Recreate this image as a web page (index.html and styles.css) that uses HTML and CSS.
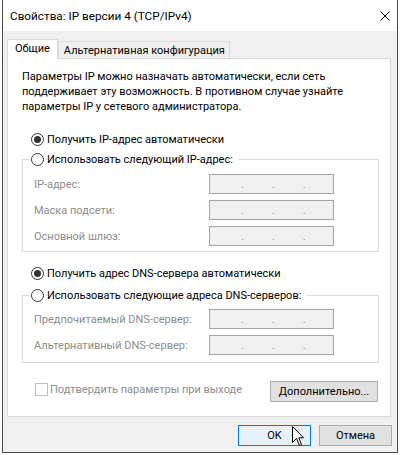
FILE: index.html
```html
<!DOCTYPE html>
<html>
<head>
	<meta charset="utf-8">
	<title>Свойства: IP версии 4 (TCP/IPv4)</title>
	<link rel="stylesheet" href="styles.css">
</head>
<body>
	<div class="window">
		<div class="titlebar">
			<span class="title">Свойства: IP версии 4 (TCP/IPv4)</span>
			<svg class="close" width="10" height="10" viewBox="0 0 10 10"><path d="M0.5 0.5 L9.5 9.5 M9.5 0.5 L0.5 9.5" stroke="#000" stroke-width="1"/></svg>
		</div>

		<div class="dialog">
			<div class="tabs">
				<div class="tab tab-active">Общие</div>
				<div class="tab">Альтернативная конфигурация</div>
			</div>

			<div class="panel">
				<p class="intro">Параметры IP можно назначать автоматически, если сеть<br>поддерживает эту возможность. В противном случае узнайте<br>параметры IP у сетевого администратора.</p>

				<div class="option option-first"><span class="radio checked"></span>Получить IP-адрес автоматически</div>

				<fieldset class="group group-ip">
					<legend><span class="option"><span class="radio"></span>Использовать следующий IP-адрес:</span></legend>
					<div class="fields">
						<span class="field-label">IP-адрес:</span>
						<span class="ip-box"><i>.</i><i>.</i><i>.</i></span>
						<span class="field-label">Маска подсети:</span>
						<span class="ip-box"><i>.</i><i>.</i><i>.</i></span>
						<span class="field-label">Основной шлюз:</span>
						<span class="ip-box"><i>.</i><i>.</i><i>.</i></span>
					</div>
				</fieldset>

				<div class="option option-dns"><span class="radio checked"></span>Получить адрес DNS-сервера автоматически</div>

				<fieldset class="group group-dns">
					<legend><span class="option"><span class="radio"></span>Использовать следующие адреса DNS-серверов:</span></legend>
					<div class="fields">
						<span class="field-label">Предпочитаемый DNS-сервер:</span>
						<span class="ip-box"><i>.</i><i>.</i><i>.</i></span>
						<span class="field-label">Альтернативный DNS-сервер:</span>
						<span class="ip-box"><i>.</i><i>.</i><i>.</i></span>
					</div>
				</fieldset>

				<div class="confirm-row">
					<span class="checkbox"></span>
					<span class="confirm-label">Подтвердить параметры при выходе</span>
					<button class="btn btn-advanced">Дополнительно...</button>
				</div>
			</div>

			<div class="actions">
				<button class="btn btn-default">OK</button>
				<button class="btn">Отмена</button>
			</div>
		</div>
	</div>

	<svg class="cursor" width="13" height="21" viewBox="0 0 13 21"><path d="M0.5 0.5 L0.5 16.5 L4.5 12.5 L7.5 19.5 L9.5 18.5 L6.8 11.8 L11.5 11.8 Z" fill="#fff" stroke="#000" stroke-width="1" stroke-linejoin="miter"/></svg>
</body>
</html>
```

FILE: styles.css
```css
/* Windows 10 style dialog */
* {
	box-sizing: border-box;
}

body {
	margin: 0;
	background: #fff;
	font-family: Roboto, "Noto Sans", sans-serif;
	font-size: 11px;
	color: #000;
}

.window {
	width: 396px;
	height: 453px;
	margin-left: 2px;
	border: 1px solid #4a4a4a;
	border-top: none;
	background: #f0f0f0;
}

.titlebar {
	display: flex;
	align-items: center;
	height: 31px;
	padding: 0 7px 0 7px;
	background: #fff;
}

.title {
	font-size: 11.75px;
}

.close {
	margin-left: auto;
}

.dialog {
	padding: 8px 6px 0 4px;
}

.tabs {
	position: relative;
	z-index: 1;
	display: flex;
	align-items: flex-end;
	margin-bottom: -1px;
}

.tab {
	display: flex;
	align-items: center;
	height: 18px;
	padding: 0 4px 0 5px;
	border: 1px solid #d9d9d9;
	background: #f0f0f0;
	white-space: nowrap;
}

.tab-active {
	height: 20px;
	padding: 0 7px 1px 7px;
	background: #fff;
	border-bottom-color: #fff;
}

.panel {
	height: 359px;
	border: 1px solid #d9d9d9;
	background: #fff;
}

.intro {
	margin: 0;
	padding: 10px 0 0 14px;
	line-height: 15px;
	white-space: nowrap;
}

.option {
	display: flex;
	align-items: center;
	height: 15px;
	line-height: 15px;
	white-space: nowrap;
}

.option-first {
	margin: 18px 0 0 23px;
}

.option-dns {
	margin: 14px 0 0 23px;
}

.radio {
	display: inline-flex;
	align-items: center;
	justify-content: center;
	width: 13px;
	height: 13px;
	margin-right: 3px;
	border: 1px solid #333;
	border-radius: 50%;
	background: #fff;
}

.radio.checked::after {
	content: "";
	width: 7px;
	height: 7px;
	border-radius: 50%;
	background: #333;
}

.group {
	width: 357px;
	margin: 5px 0 0 14px;
	padding: 0;
	border: 1px solid #dcdcdc;
	min-inline-size: 0;
}

.group-dns {
	margin-top: 7px;
}

.group legend {
	margin-left: 8px;
	padding: 0 6px 0 0;
}

.fields {
	display: grid;
	grid-template-columns: 175px 125px;
	row-gap: 6px;
	align-items: center;
	padding: 7px 0 5px 11px;
}

.group-dns .fields {
	padding: 6px 0 7px 11px;
}

.field-label {
	color: #8c8c8c;
	white-space: nowrap;
}

.ip-box {
	display: flex;
	height: 20px;
	padding-left: 31px;
	border: 1px solid #a5a5a5;
	background: #f0f0f0;
	color: #8c8c8c;
	line-height: 20px;
	overflow: hidden;
}

.ip-box i {
	width: 3px;
	margin-right: 28px;
	font-style: normal;
}

.confirm-row {
	display: flex;
	align-items: flex-start;
	height: 21px;
	margin-top: 18px;
}

.checkbox {
	width: 13px;
	height: 13px;
	margin: 2px 0 0 27px;
	border: 1px solid #bcbcbc;
	background: #fff;
}

.confirm-label {
	margin: 1px 0 0 2px;
	color: #8c8c8c;
	line-height: 15px;
	white-space: nowrap;
}

.btn {
	height: 21px;
	padding: 0;
	border: 1px solid #adadad;
	background: #e1e1e1;
	font-family: inherit;
	font-size: 11px;
	color: #000;
}

.btn-advanced {
	width: 108px;
	margin: 0 12px 0 auto;
}

.actions {
	display: flex;
	justify-content: flex-end;
	gap: 8px;
	margin: 8px -1px 0 0;
}

.actions .btn {
	width: 73px;
}

.btn-default {
	border-color: #0078d7;
	background: #e5f1fb;
}

.cursor {
	position: absolute;
	left: 292px;
	top: 426px;
}
```
